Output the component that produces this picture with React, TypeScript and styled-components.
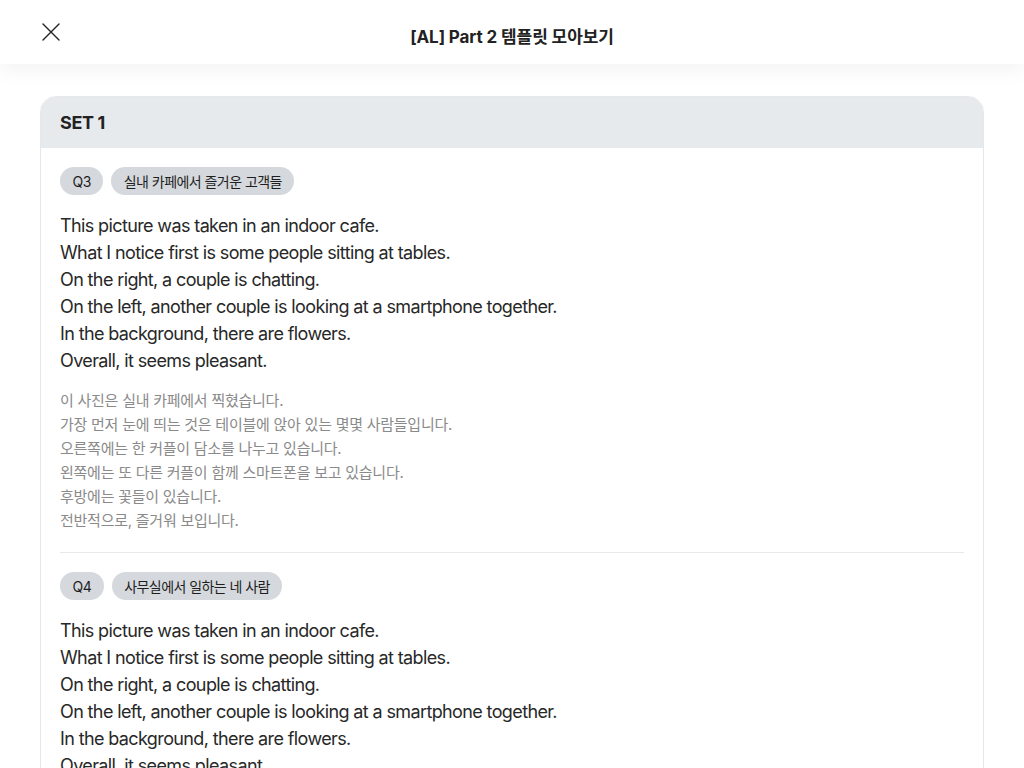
import React from "react";
import styled, { createGlobalStyle } from "styled-components";

const Global = createGlobalStyle`
  * { box-sizing: border-box; }
  html, body { margin: 0; padding: 0; background: #ffffff; }
  body { font-family: Inter, "Noto Sans CJK KR", sans-serif; color: #222; }
`;

const Page = styled.div`
  min-height: 100vh;
  background: #fff;
`;

const TopBar = styled.header`
  position: relative;
  height: 64px;
  display: flex;
  align-items: center;
  justify-content: center;
  background: #fff;
  box-shadow: 0 6px 20px rgba(0, 0, 0, 0.05);
  z-index: 1;
`;

const CloseButton = styled.button`
  position: absolute;
  left: 38px;
  top: 19px;
  width: 26px;
  height: 26px;
  padding: 0;
  border: none;
  background: transparent;
  display: flex;
  align-items: center;
  justify-content: center;
  cursor: pointer;
`;

const Title = styled.h1`
  margin: 6px 0 0;
  font-size: 17px;
  font-weight: 700;
  color: #222;
  letter-spacing: -0.1px;
`;

const Content = styled.main`
  padding: 32px 40px 40px;
`;

const Card = styled.section`
  border: 1px solid #e5e7eb;
  border-radius: 16px;
  overflow: hidden;
  background: #fff;
`;

const CardHeader = styled.div`
  height: 51px;
  display: flex;
  align-items: center;
  padding: 0 19px;
  background: #e7eaed;
  font-size: 18px;
  font-weight: 700;
  color: #222;
  letter-spacing: -0.4px;
`;

const CardBody = styled.div`
  padding: 0 19px;
`;

const Item = styled.article`
  padding: 19px 0 19px;
  border-bottom: 1px solid #e8e8e8;
`;

const ChipRow = styled.div`
  display: flex;
  gap: 8px;
`;

const Chip = styled.span`
  height: 28px;
  display: inline-flex;
  align-items: center;
  padding: 0 12.5px;
  border-radius: 14px;
  background: #d5d8dc;
  font-size: 14px;
  font-weight: 400;
  color: #1e1e1e;
  letter-spacing: -0.55px;
`;

const English = styled.div`
  margin-top: 17px;
  font-size: 18px;
  line-height: 27px;
  color: #282828;
  letter-spacing: -0.62px;
`;

const Korean = styled.div`
  margin-top: 15px;
  font-size: 15px;
  line-height: 24px;
  color: #8a8a8a;
  letter-spacing: -0.25px;
`;

const Line = styled.div``;

const english = [
  "This picture was taken in an indoor cafe.",
  "What I notice first is some people sitting at tables.",
  "On the right, a couple is chatting.",
  "On the left, another couple is looking at a smartphone together.",
  "In the background, there are flowers.",
  "Overall, it seems pleasant.",
];

const korean = [
  "이 사진은 실내 카페에서 찍혔습니다.",
  "가장 먼저 눈에 띄는 것은 테이블에 앉아 있는 몇몇 사람들입니다.",
  "오른쪽에는 한 커플이 담소를 나누고 있습니다.",
  "왼쪽에는 또 다른 커플이 함께 스마트폰을 보고 있습니다.",
  "후방에는 꽃들이 있습니다.",
  "전반적으로, 즐거워 보입니다.",
];

const items = [
  { q: "Q3", title: "실내 카페에서 즐거운 고객들" },
  { q: "Q4", title: "사무실에서 일하는 네 사람" },
];

export default function App() {
  return (
    <Page>
      <Global />
      <TopBar>
        <CloseButton aria-label="닫기">
          <svg width="18" height="18" viewBox="0 0 18 18" fill="none">
            <path d="M1 1L17 17M17 1L1 17" stroke="#222" strokeWidth="1.4" strokeLinecap="round" />
          </svg>
        </CloseButton>
        <Title>[AL] Part 2 템플릿 모아보기</Title>
      </TopBar>
      <Content>
        <Card>
          <CardHeader>SET 1</CardHeader>
          <CardBody>
            {items.map((it) => (
              <Item key={it.q}>
                <ChipRow>
                  <Chip>{it.q}</Chip>
                  <Chip>{it.title}</Chip>
                </ChipRow>
                <English>
                  {english.map((l) => (
                    <Line key={l}>{l}</Line>
                  ))}
                </English>
                <Korean>
                  {korean.map((l) => (
                    <Line key={l}>{l}</Line>
                  ))}
                </Korean>
              </Item>
            ))}
          </CardBody>
        </Card>
      </Content>
    </Page>
  );
}
